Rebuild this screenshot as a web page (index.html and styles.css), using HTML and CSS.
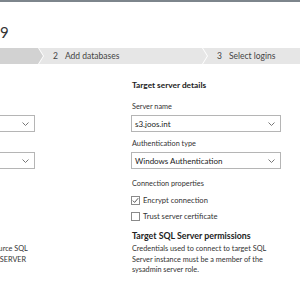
FILE: index.html
```html
<!DOCTYPE html>
<html lang="en">
<head>
    <meta charset="UTF-8">
    <title>Migrate logins</title>
    <link rel="stylesheet" href="styles.css">
</head>
<body>
    <div class="topbar"></div>
    <div class="page">
        <h1 class="title">Migrate logins to SQL Server 2019</h1>

        <div class="steps">
            <div class="step done"><span class="num">1</span>Select source</div>
            <div class="step"><span class="num">2</span>Add databases</div>
            <div class="step"><span class="num">3</span>Select logins</div>
        </div>

        <div class="columns">
            <div class="column">
                <h2>Source server details</h2>
                <label>Server name</label>
                <div class="select">
                    <span>s2.joos.int</span>
                    <svg class="caret" width="7" height="4" viewBox="0 0 7 4"><polyline points="0.5,0.5 3.5,3.5 6.5,0.5" /></svg>
                </div>
                <label>Authentication type</label>
                <div class="select">
                    <span>SQL Login</span>
                    <svg class="caret" width="7" height="4" viewBox="0 0 7 4"><polyline points="0.5,0.5 3.5,3.5 6.5,0.5" /></svg>
                </div>
                <label class="group">Connection</label>
                <div class="check"><span class="box"></span>TLS</div>
                <div class="check"><span class="box"></span>Trust</div>
                <h3>Permissions</h3>
                <p>Credentials used to connect to a source SQL<br>Server logins must have CONTROL SERVER<br>permission.</p>
            </div>

            <div class="column">
                <h2>Target server details</h2>
                <label>Server name</label>
                <div class="select">
                    <span>s3.joos.int</span>
                    <svg class="caret" width="7" height="4" viewBox="0 0 7 4"><polyline points="0.5,0.5 3.5,3.5 6.5,0.5" /></svg>
                </div>
                <label>Authentication type</label>
                <div class="select">
                    <span>Windows Authentication</span>
                    <svg class="caret" width="7" height="4" viewBox="0 0 7 4"><polyline points="0.5,0.5 3.5,3.5 6.5,0.5" /></svg>
                </div>
                <label class="group">Connection properties</label>
                <div class="check">
                    <span class="box"><svg width="7" height="7" viewBox="0 0 7 7"><polyline points="0.8,3.6 2.6,5.4 6.2,1.2" /></svg></span>
                    Encrypt connection
                </div>
                <div class="check"><span class="box"></span>Trust server certificate</div>
                <h3>Target SQL Server permissions</h3>
                <p>Credentials used to connect to target SQL<br>Server instance must be a member of the<br>sysadmin server role.</p>
            </div>
        </div>
    </div>
</body>
</html>
```

FILE: styles.css
```css
body {
    margin: 0;
    font-family: Lato, 'Noto Sans', sans-serif;
    font-size: 7.3px;
    color: #333;
    background: #fff;
    width: 300px;
    height: 300px;
    overflow: hidden;
}

.topbar {
    height: 2px;
    background-color: #7d858c;
}

.page {
    margin-left: -115px;
    width: 420px;
}

.title {
    margin: 20px 0 0 -103px;
    height: 26px;
    font-size: 15px;
    font-weight: normal;
    color: #333;
    line-height: 20px;
    white-space: nowrap;
}

.steps {
    display: flex;
    height: 16px;
    margin-left: -10px;
}

.step {
    flex: 0 0 168px;
    margin-right: -4px;
    display: flex;
    align-items: center;
    padding-left: 14px;
    box-sizing: border-box;
    background-color: #e6e6e6;
    color: #444;
    font-size: 8.5px;
    white-space: nowrap;
    clip-path: polygon(0 0, calc(100% - 5px) 0, 100% 50%, calc(100% - 5px) 100%, 0 100%, 5px 50%);
}

.step.done {
    background-color: #d2d2d2;
}

.step .num {
    margin-right: 7px;
}

.columns {
    display: flex;
    gap: 96px;
    padding-top: 16px;
}

.column {
    width: 150px;
    flex: 0 0 150px;
}

h2 {
    margin: 0 0 10px 1px;
    font-size: 8.3px;
    font-weight: bold;
    line-height: 11px;
    color: #222;
    white-space: nowrap;
}

label {
    display: block;
    margin: 0 0 3px 1px;
    line-height: 11px;
    white-space: nowrap;
}

label.group {
    padding-top: 3px;
}

.select {
    display: flex;
    justify-content: space-between;
    align-items: center;
    height: 17px;
    box-sizing: border-box;
    border: 1px solid #b5b5b5;
    padding: 0 5px 0 3px;
    margin-bottom: 6px;
    color: #222;
    font-size: 8px;
    white-space: nowrap;
}

.caret {
    fill: none;
    stroke: #777;
    stroke-width: 1;
}

.check {
    display: flex;
    align-items: center;
    height: 16px;
    font-size: 7.6px;
    white-space: nowrap;
}

label.group + .check {
    margin-top: 1px;
}

.box {
    display: flex;
    align-items: center;
    justify-content: center;
    width: 9px;
    height: 9px;
    box-sizing: border-box;
    border: 1px solid #8a8a8a;
    margin-right: 3px;
    flex: 0 0 9px;
}

.box polyline {
    fill: none;
    stroke: #444;
    stroke-width: 0.9;
}

h3 {
    margin: 6px 0 3px 1px;
    font-size: 8.8px;
    font-weight: bold;
    line-height: 11px;
    color: #222;
    white-space: nowrap;
}

p {
    margin: 0 0 0 1px;
    line-height: 10.5px;
    white-space: nowrap;
}
```
